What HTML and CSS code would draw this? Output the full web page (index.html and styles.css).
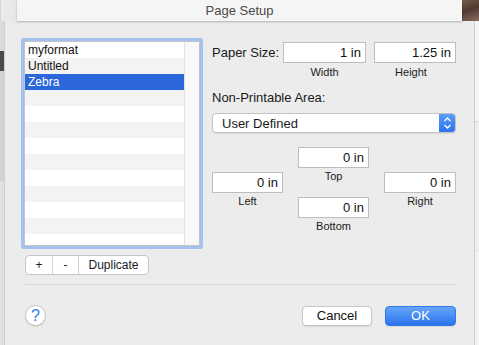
FILE: index.html
```html
<!DOCTYPE html>
<html lang="en">
<head>
    <meta charset="UTF-8">
    <title>Page Setup</title>
    <link rel="stylesheet" href="styles.css">
</head>
<body>
    <div class="screen">
        <div class="topbar">
            <div class="top-left"></div>
            <div class="titlebar">Page Setup</div>
            <div class="top-right"></div>
        </div>
        <div class="stage">
            <div class="edge-left"></div>
            <div class="sheet">
                <div class="main">
                    <div class="left-col">
                        <div class="list">
                            <div class="rows">
                                <div class="row">myformat</div>
                                <div class="row">Untitled</div>
                                <div class="row selected">Zebra</div>
                                <div class="row"></div>
                                <div class="row"></div>
                                <div class="row"></div>
                                <div class="row"></div>
                                <div class="row"></div>
                                <div class="row"></div>
                                <div class="row"></div>
                                <div class="row"></div>
                                <div class="row"></div>
                                <div class="row"></div>
                            </div>
                            <div class="gutter"></div>
                        </div>
                        <div class="segmented">
                            <button class="seg seg-plus">+</button>
                            <button class="seg seg-minus">-</button>
                            <button class="seg seg-dup">Duplicate</button>
                        </div>
                    </div>

                    <div class="right-col">
                        <div class="paper-grid">
                            <span class="label">Paper Size:</span>
                            <input class="field" type="text" value="1 in">
                            <input class="field" type="text" value="1.25 in">
                            <span></span>
                            <span class="caption">Width</span>
                            <span class="caption">Height</span>
                        </div>
                        <div class="section-label">Non-Printable Area:</div>
                        <div class="popup">
                            <span class="popup-text">User Defined</span>
                            <span class="stepper">
                                <svg width="9" height="14" viewBox="0 0 9 14">
                                    <path d="M1.5 5 L4.5 2 L7.5 5" fill="none" stroke="#fff" stroke-width="1.4"/>
                                    <path d="M1.5 9 L4.5 12 L7.5 9" fill="none" stroke="#fff" stroke-width="1.4"/>
                                </svg>
                            </span>
                        </div>
                        <div class="margins">
                            <div class="margin-col side">
                                <div class="margin-field">
                                    <input class="field" type="text" value="0 in">
                                    <span class="caption">Left</span>
                                </div>
                            </div>
                            <div class="margin-col middle">
                                <div class="margin-field">
                                    <input class="field" type="text" value="0 in">
                                    <span class="caption">Top</span>
                                </div>
                                <div class="margin-field">
                                    <input class="field" type="text" value="0 in">
                                    <span class="caption">Bottom</span>
                                </div>
                            </div>
                            <div class="margin-col side">
                                <div class="margin-field">
                                    <input class="field" type="text" value="0 in">
                                    <span class="caption">Right</span>
                                </div>
                            </div>
                        </div>
                    </div>
                </div>

                <div class="separator"></div>

                <div class="footer">
                    <button class="help">?</button>
                    <div class="actions">
                        <button class="btn">Cancel</button>
                        <button class="btn btn-default">OK</button>
                    </div>
                </div>
            </div>
            <div class="edge-right"></div>
        </div>
    </div>
</body>
</html>
```

FILE: styles.css
```css
* {
    box-sizing: border-box;
}
body {
    margin: 0;
    font-family: "Liberation Sans", Arial, sans-serif;
    font-size: 13px;
    color: #1a1a1a;
    background-color: #e4e4e4;
}
.screen {
    width: 479px;
    height: 345px;
    display: flex;
    flex-direction: column;
    overflow: hidden;
}
.topbar {
    display: flex;
    height: 21px;
    flex-shrink: 0;
}
.top-left {
    width: 17px;
    background: linear-gradient(to right, #d4d4d4 0, #d4d4d4 1px, #ebebeb 1px, #e6e6e6 100%);
}
.titlebar {
    flex: 1;
    background-color: #f5f5f5;
    text-align: center;
    line-height: 21px;
    font-size: 13px;
    color: #4a4a4a;
    box-shadow: 0 1px 2px rgba(0, 0, 0, 0.25);
    position: relative;
    z-index: 2;
}
.top-right {
    width: 17px;
    background: linear-gradient(160deg, #7a5c4c 0%, #4f3a30 45%, #8a6e60 100%);
}
.stage {
    flex: 1;
    display: flex;
}
.edge-left {
    width: 4px;
    background: linear-gradient(to bottom, #dcdcdc 0, #dcdcdc 30px, #4a4a4a 30px, #4a4a4a 50px, #d2d2d2 50px, #d2d2d2 160px, #e0e0e0 160px);
}
.edge-right {
    width: 4px;
    background: linear-gradient(to bottom, #f4f4f4 0, #f4f4f4 100px, #c8c8c8 100px, #eeeeee 101px, #eeeeee 230px, #d8d8e6 230px, #f2f2f2 231px);
}
.sheet {
    flex: 1;
    background-color: #ececec;
    border-left: 1px solid #cfcfcf;
    border-right: 1px solid #cfcfcf;
    padding: 20px 18px 0 19px;
    display: flex;
    flex-direction: column;
}
.main {
    display: flex;
    gap: 12px;
}
.left-col {
    width: 176px;
    display: flex;
    flex-direction: column;
}
.list {
    height: 205px;
    display: flex;
    background-color: #fff;
    border: 1px solid #c4c4c4;
    box-shadow: 0 0 0 3px #a3c2f2;
    border-radius: 1px;
    overflow: hidden;
}
.rows {
    flex: 1;
}
.row {
    height: 16px;
    line-height: 16px;
    padding-left: 3px;
    font-size: 12px;
    color: #111;
}
.row:nth-child(even) {
    background-color: #f3f3f3;
}
.row.selected {
    background-color: #2c66dc;
    color: #fff;
}
.gutter {
    width: 15px;
    background-color: #f8f8f8;
    border-left: 1px solid #e2e2e2;
}
.segmented {
    display: flex;
    margin-top: 9px;
    margin-left: 1px;
    height: 20px;
    width: 124px;
    background-color: #fff;
    border: 1px solid #c6c6c6;
    border-radius: 4px;
    overflow: hidden;
}
.seg {
    font-family: inherit;
    font-size: 12px;
    color: #1a1a1a;
    background: none;
    border: none;
    padding: 0;
    height: 18px;
    line-height: 18px;
}
.seg-plus {
    width: 27px;
    border-right: 1px solid #d2d2d2;
}
.seg-minus {
    width: 26px;
    border-right: 1px solid #d2d2d2;
}
.seg-dup {
    flex: 1;
}
.right-col {
    width: 244px;
    display: flex;
    flex-direction: column;
    padding-top: 1px;
}
.paper-grid {
    display: grid;
    grid-template-columns: 71px 83px 82px;
    column-gap: 0;
    row-gap: 1px;
}
.paper-grid .field:last-of-type {
    margin-left: 8px;
}
.label {
    line-height: 21px;
    font-size: 13px;
}
.field {
    height: 21px;
    width: 100%;
    border: 1px solid #bdbdbd;
    background-color: #fff;
    font-family: inherit;
    font-size: 13px;
    color: #111;
    text-align: right;
    padding: 0 4px 0 2px;
    margin: 0;
    outline: none;
}
.caption {
    display: block;
    text-align: center;
    font-size: 11px;
    line-height: 16px;
    color: #1a1a1a;
}
.paper-grid .caption:last-child {
    padding-left: 8px;
}
.section-label {
    margin-top: 10px;
    line-height: 16px;
    font-size: 13px;
}
.popup {
    margin-top: 7px;
    height: 20px;
    display: flex;
    align-items: center;
    background-color: #fff;
    border: 1px solid #c4c4c4;
    border-radius: 4px;
    box-shadow: 0 1px 1px rgba(0, 0, 0, 0.08);
    overflow: hidden;
}
.popup-text {
    flex: 1;
    padding-left: 9px;
    font-size: 13px;
}
.stepper {
    width: 16px;
    height: 100%;
    display: flex;
    align-items: center;
    justify-content: center;
    background: linear-gradient(to bottom, #5a9ef8, #2a74ef);
}
.margins {
    margin-top: 14px;
    display: grid;
    grid-template-columns: 71px 71px 72px;
    column-gap: 15px;
}
.margin-col {
    display: flex;
    flex-direction: column;
    gap: 13px;
}
.margin-col.side {
    padding-top: 25px;
}
.margin-field {
    display: flex;
    flex-direction: column;
}
.separator {
    margin-top: 9px;
    height: 1px;
    background-color: #d5d5d5;
    margin-left: 1px;
}
.footer {
    margin-top: 20px;
    display: flex;
    justify-content: space-between;
    align-items: center;
    margin-left: 1px;
}
.help {
    width: 21px;
    height: 21px;
    border-radius: 50%;
    border: 1px solid #c4c4c4;
    background-color: #fff;
    color: #2f78f0;
    font-family: inherit;
    font-size: 16px;
    padding: 0;
    line-height: 19px;
    box-shadow: 0 1px 1px rgba(0, 0, 0, 0.1);
}
.actions {
    display: flex;
    gap: 13px;
}
.btn {
    width: 70px;
    height: 20px;
    border: 1px solid #c6c6c6;
    border-radius: 4px;
    background-color: #fff;
    font-family: inherit;
    font-size: 13px;
    color: #111;
    padding: 0;
    box-shadow: 0 1px 1px rgba(0, 0, 0, 0.08);
}
.btn-default {
    width: 71px;
    border-color: #2f79ec;
    background: linear-gradient(to bottom, #66a6f9, #2a73ef);
    color: #fff;
}
```
